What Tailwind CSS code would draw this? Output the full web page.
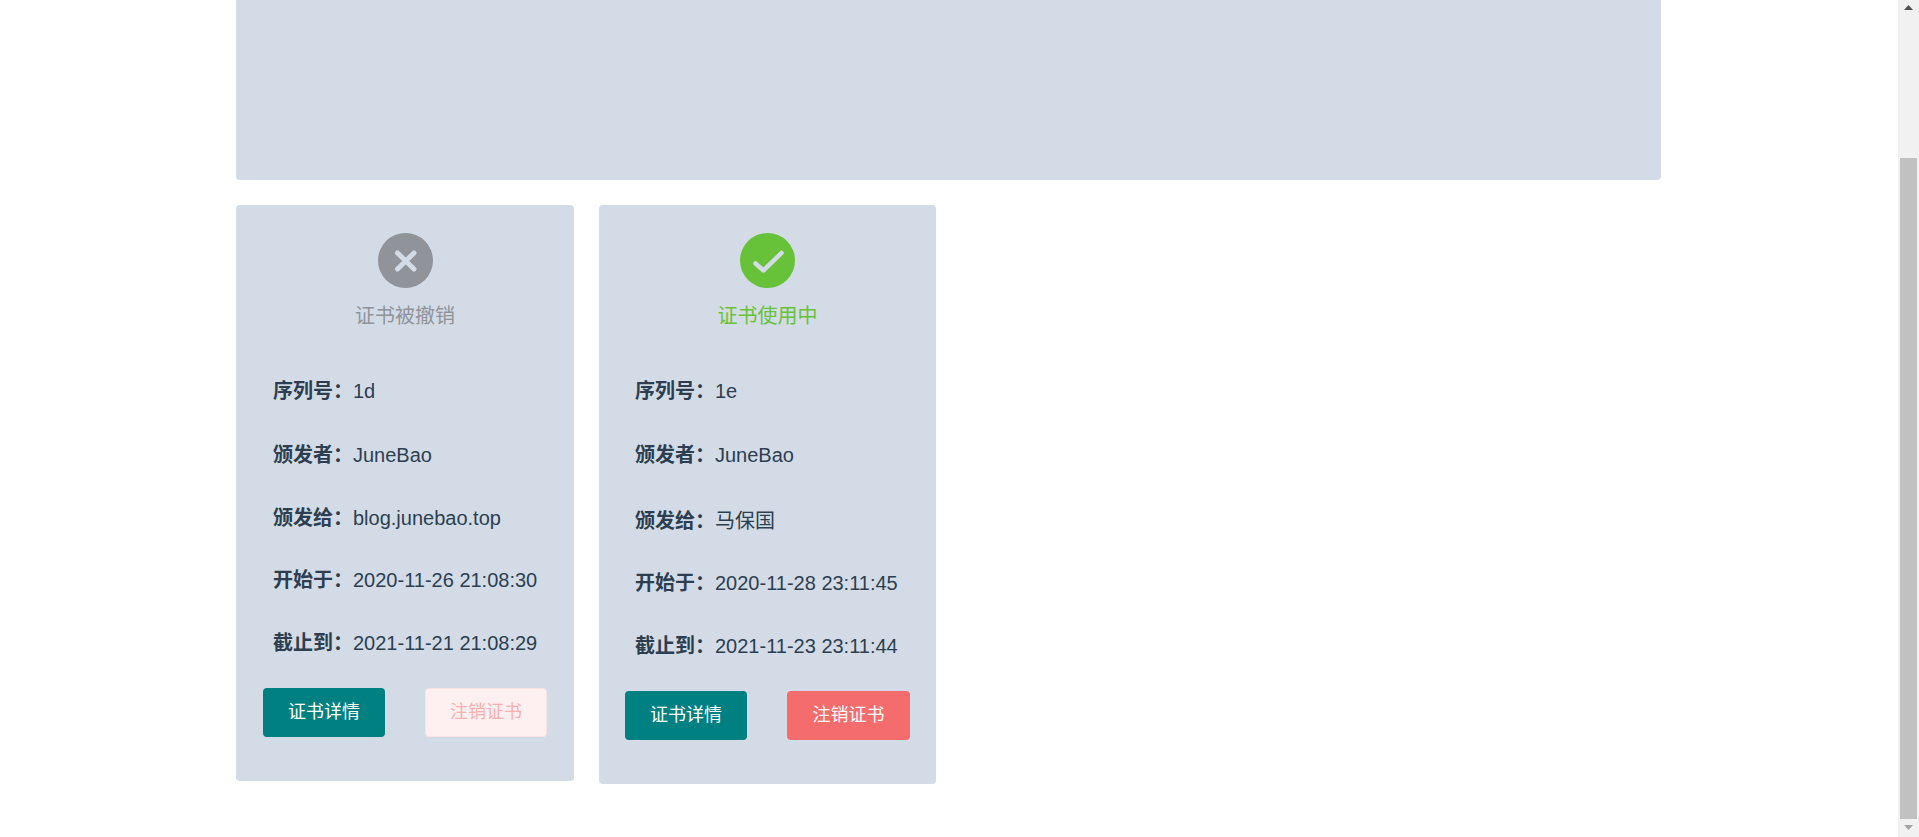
<!DOCTYPE html>
<html lang="zh">
<head>
  <meta charset="UTF-8" />
  <title>证书列表</title>
  <script src="https://cdn.jsdelivr.net/npm/@tailwindcss/browser@4"></script>
</head>
<body class="bg-white h-screen overflow-hidden flex font-['Liberation_Sans','Noto_Sans_CJK_SC',sans-serif] text-[#2c3e50]">
  <main class="flex-1 pl-[236px]">
    <!-- top panel -->
    <div class="w-[1425px] h-[180px] bg-[#d3dce6] rounded-b-[4px]"></div>

    <div class="flex items-start gap-[25px] mt-[25px]">
      <!-- revoked -->
      <div class="w-[338px] h-[576px] bg-[#d3dce6] rounded-[4px] pt-[28px] px-[27px]">
        <svg class="block mx-auto" width="55" height="55" viewBox="0 0 55 55">
          <circle cx="27.5" cy="27.5" r="27.5" fill="#909399" />
          <path d="M19.5 20 L36 36 M36 20 L19.5 36" stroke="#d3dce6" stroke-width="5" stroke-linecap="round" fill="none" />
        </svg>
        <p class="mt-[14px] text-center text-[20px] leading-[28px] text-[#909399]">证书被撤销</p>
        <div class="mt-[49px] pl-[10px] text-[20px] leading-[24px]">
          <div class="h-[24px] mb-[40px]"><b>序列号：</b>1d</div>
          <div class="h-[24px] mb-[39px]"><b>颁发者：</b>JuneBao</div>
          <div class="h-[24px] mb-[38px]"><b>颁发给：</b>blog.junebao.top</div>
          <div class="h-[24px] mb-[39px]"><b>开始于：</b>2020-11-26 21:08:30</div>
          <div class="h-[24px]"><b>截止到：</b>2021-11-21 21:08:29</div>
        </div>
        <div class="flex justify-between mt-[33px]">
          <button class="w-[122px] h-[49px] rounded-[4px] bg-[#008080] text-white text-[18px]">证书详情</button>
          <button class="w-[122px] h-[49px] rounded-[4px] bg-[#fef0f0] border border-[#fde2e2] text-[#fab0b0] text-[18px]">注销证书</button>
        </div>
      </div>

      <!-- in use -->
      <div class="w-[337px] h-[579px] bg-[#d3dce6] rounded-[4px] pt-[28px] pl-[26px] pr-[26px]">
        <svg class="block mx-auto" width="55" height="55" viewBox="0 0 55 55">
          <circle cx="27.5" cy="27.5" r="27.5" fill="#67c23a" />
          <path d="M15.5 30.5 L23.5 37.5 L41.5 20" stroke="#d3dce6" stroke-width="4.5" stroke-linecap="round" stroke-linejoin="round" fill="none" />
        </svg>
        <p class="mt-[14px] text-center text-[20px] leading-[28px] text-[#67c23a]">证书使用中</p>
        <div class="mt-[49px] pl-[10px] text-[20px] leading-[24px]">
          <div class="h-[24px] mb-[40px]"><b>序列号：</b>1e</div>
          <div class="h-[24px] mb-[42px]"><b>颁发者：</b>JuneBao</div>
          <div class="h-[24px] mb-[38px]"><b>颁发给：</b>马保国</div>
          <div class="h-[24px] mb-[39px]"><b>开始于：</b>2020-11-28 23:11:45</div>
          <div class="h-[24px]"><b>截止到：</b>2021-11-23 23:11:44</div>
        </div>
        <div class="flex justify-between mt-[33px]">
          <button class="w-[122px] h-[49px] rounded-[4px] bg-[#008080] text-white text-[18px]">证书详情</button>
          <button class="w-[123px] h-[49px] rounded-[4px] bg-[#f56c6c] text-white text-[18px]">注销证书</button>
        </div>
      </div>
    </div>
  </main>

  <!-- scrollbar -->
  <aside class="w-[21px] h-full bg-[#f1f1f1] flex flex-col items-center shrink-0">
    <svg class="mt-[5px] block" width="9" height="5" viewBox="0 0 9 5"><path d="M4.5 0 L9 5 H0 Z" fill="#505050" /></svg>
    <div class="w-[17px] h-[661px] mt-[148px] bg-[#c1c1c1]"></div>
    <svg class="mt-[6px] block" width="9" height="5" viewBox="0 0 9 5"><path d="M0 0 H9 L4.5 5 Z" fill="#a3a3a3" /></svg>
  </aside>
</body>
</html>
